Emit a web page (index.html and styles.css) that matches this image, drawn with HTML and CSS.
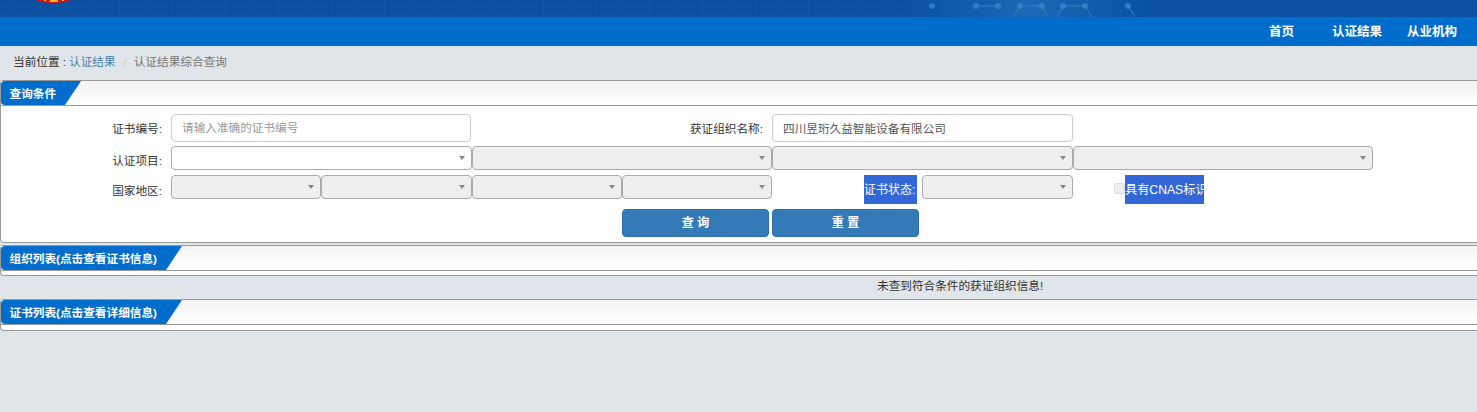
FILE: index.html
```html
<!DOCTYPE html>
<html lang="zh-CN">
<head>
<meta charset="utf-8">
<title>认证结果综合查询</title>
<link rel="stylesheet" href="styles.css">
</head>
<body>
<header class="banner">
  <svg class="banner-art" width="1477" height="17" viewBox="0 0 1477 17" aria-hidden="true">
    <defs>
      <pattern id="grid" x="13" y="-1" width="26.5" height="8" patternUnits="userSpaceOnUse">
        <path d="M0 0V8M0 8H26.5" fill="none" stroke="#2a68b0" stroke-opacity=".4" stroke-width="1"/>
      </pattern>
      <linearGradient id="glow" x1="0" x2="1" y1="0" y2="0">
        <stop offset="0" stop-color="#2a78c4" stop-opacity="0"/>
        <stop offset=".5" stop-color="#2a78c4" stop-opacity=".6"/>
        <stop offset="1" stop-color="#2a78c4" stop-opacity="0"/>
      </linearGradient>
    </defs>
    <rect width="960" height="17" fill="url(#grid)"/>
    <rect x="900" width="260" height="17" fill="url(#glow)"/>
    <path d="M976 6H998M1020 6H1042M1063 6H1085M1013 17L1020 6M1042 6L1048 17M1063 6L1057 17M1085 6L1092 17M1128 6L1135 17" fill="none" stroke="#4f93d0" stroke-opacity=".6" stroke-width="1"/>
    <g fill="#3f86c8" fill-opacity=".75"><circle cx="932" cy="6" r="3"/><circle cx="976" cy="6" r="3"/><circle cx="998" cy="6" r="3"/><circle cx="1020" cy="6" r="3"/><circle cx="1042" cy="6" r="3"/><circle cx="1063" cy="6" r="3"/><circle cx="1085" cy="6" r="3"/><circle cx="1128" cy="6" r="3"/></g>
    <path d="M36 0H70C66 4 40 4 36 0Z" fill="#d5141c"/>
    <path d="M44 0h2v1h-2zM50 0h8v2h-8zM62 0h2v1h-2z" fill="#eab92c"/>
  </svg>
</header>
<nav class="nav">
  <a class="nav-item nav-home">首页</a>
  <a class="nav-item nav-result">认证结果</a>
  <a class="nav-item nav-org">从业机构</a>
</nav>
<div class="crumbs">
  <span class="crumb-label">当前位置 :</span>
  <a class="crumb-link">认证结果</a>
  <span class="crumb-sep">/</span>
  <span class="crumb-now">认证结果综合查询</span>
</div>

<section class="panel panel-query">
  <div class="panel-head"><h2 class="tab tab-short">查询条件</h2></div>
  <form class="query">
    <div class="row row-one">
      <label class="lbl lbl-cert">证书编号:</label>
      <input class="text cell-cert" placeholder="请输入准确的证书编号">
      <label class="lbl lbl-org">获证组织名称:</label>
      <input class="text cell-org" value="四川昱珩久益智能设备有限公司">
    </div>
    <div class="row row-two">
      <label class="lbl lbl-cert">认证项目:</label>
      <div class="sel sel-wide sel-on"></div>
      <div class="sel sel-wide"></div>
      <div class="sel sel-wide"></div>
      <div class="sel sel-wide"></div>
    </div>
    <div class="row row-three">
      <label class="lbl lbl-cert">国家地区:</label>
      <div class="sel sel-half"></div>
      <div class="sel sel-half"></div>
      <div class="sel sel-half"></div>
      <div class="sel sel-half"></div>
      <label class="lbl-hi lbl-status">证书状态:</label>
      <div class="sel sel-status"></div>
      <span class="check"></span>
      <label class="lbl-hi lbl-cnas">具有CNAS标识</label>
    </div>
    <div class="actions">
      <button type="button" class="btn">查 询</button>
      <button type="button" class="btn">重 置</button>
    </div>
  </form>
</section>

<section class="panel panel-list panel-org">
  <div class="panel-head"><h2 class="tab">组织列表(点击查看证书信息)</h2></div>
</section>
<p class="empty">未查到符合条件的获证组织信息!</p>
<section class="panel panel-list">
  <div class="panel-head"><h2 class="tab">证书列表(点击查看详细信息)</h2></div>
</section>
</body>
</html>
```
FILE: styles.css
```css
* { box-sizing: border-box; }
html, body { margin: 0; padding: 0; }
body {
  height: 412px;
  overflow: hidden;
  background: #e0e5e9;
  color: #333;
  font: 11.65px/17px "Liberation Sans", "Noto Sans CJK SC", sans-serif;
}
.banner { height: 17px; background: #0a4fa0; overflow: hidden; }
.banner-art { display: block; }
.nav { height: 29px; background: #006dcd; display: flex; }
.nav-item { color: #fff; font-size: 12.5px; font-weight: 700; line-height: 30px; }
.nav-home { margin-left: 1269px; }
.nav-result { margin-left: 38px; }
.nav-org { margin-left: 25px; }
.crumbs { height: 34px; padding: 7px 0 0 13px; line-height: 17px; display: flex; }
.crumb-link { color: #4b7fae; margin-left: 3px; }
.crumb-sep { color: #ccc; margin: 0 7px 0 8px; }
.crumb-now { color: #777; }

.panel {
  border: 1px solid #999;
  border-right: 0;
  border-radius: 4px 0 0 4px;
  background: #fff;
}
.panel-head {
  height: 25px;
  border-bottom: 1px solid #999;
  background: linear-gradient(#f3f3f3, #fff);
}
.tab {
  margin: 0;
  height: 24px;
  width: 181px;
  padding-left: 8.5px;
  background: #006dcd;
  color: #fff;
  font-size: 11.65px;
  font-weight: 700;
  line-height: 25px;
  border-radius: 4px 0 0 4px;
  clip-path: polygon(0 0, 100% 0, calc(100% - 16px) 100%, 0 100%);
}
.tab-short { width: 80px; }
.panel-query { height: 163px; }
.panel-list { height: 32px; margin-top: 0; }
.panel-org { height: 31px; margin-top: 2px; }
.query { display: block; }
.row { display: flex; align-items: flex-start; }
.lbl { width: 161px; text-align: right; line-height: 17px; }
.lbl-org { width: 292px; }
.row-one { padding-top: 8px; height: 40px; }
.row-one .lbl { padding-top: 6px; }
.text {
  height: 28px;
  margin-left: 9px;
  border: 1px solid #ccc;
  border-radius: 4px;
  padding: 0 10px 2px;
  font: inherit;
  color: #555;
  background: #fff;
  outline: 0;
}
.text::placeholder { color: #999; opacity: 1; }
.cell-cert { width: 300px; }
.cell-org { width: 301px; }
.row-two { height: 29px; }
.row-two .lbl { padding-top: 6px; margin-right: 9px; }
.row-three { height: 34px; }
.row-three .lbl { padding-top: 7px; margin-right: 9px; }
.sel {
  position: relative;
  height: 24px;
  border: 1px solid #aaa;
  border-radius: 4px;
  background: #eee;
  flex: none;
}
.sel::after {
  content: "";
  position: absolute;
  right: 6px;
  top: 9px;
  border-style: solid;
  border-width: 4px 3.5px 0;
  border-color: #888 transparent transparent;
}
.sel-on { background: #fff; }
.sel-wide { width: 300.5px; }
.sel-half { width: 150.25px; }
.lbl-hi {
  height: 29px;
  background: #3366d6;
  color: #fff;
  font-size: 12px;
  line-height: 30px;
  flex: none;
}
.lbl-status { width: 53px; margin-left: 92px; margin-right: 5px; white-space: nowrap; text-align: left; }
.sel-status { width: 151px; }
.check {
  width: 11px;
  height: 11px;
  margin: 8px 0 0 41px;
  border: 1px solid #ddd;
  border-radius: 2px;
  background: #eee;
  flex: none;
}
.lbl-cnas { width: 79px; text-align: left; white-space: nowrap; font-size: 12.2px; }
.actions { display: flex; gap: 3px; padding-left: 621px; }
.btn {
  width: 147px;
  height: 28px;
  padding: 0;
  border: 1px solid #2e6da4;
  border-radius: 4px;
  background: #337ab7;
  color: #fff;
  font: 700 12px/17px "Liberation Sans", "Noto Sans CJK SC", sans-serif;
}
.empty { margin: 0; height: 23px; padding: 0 0 0 877px; line-height: 19px; }
```
